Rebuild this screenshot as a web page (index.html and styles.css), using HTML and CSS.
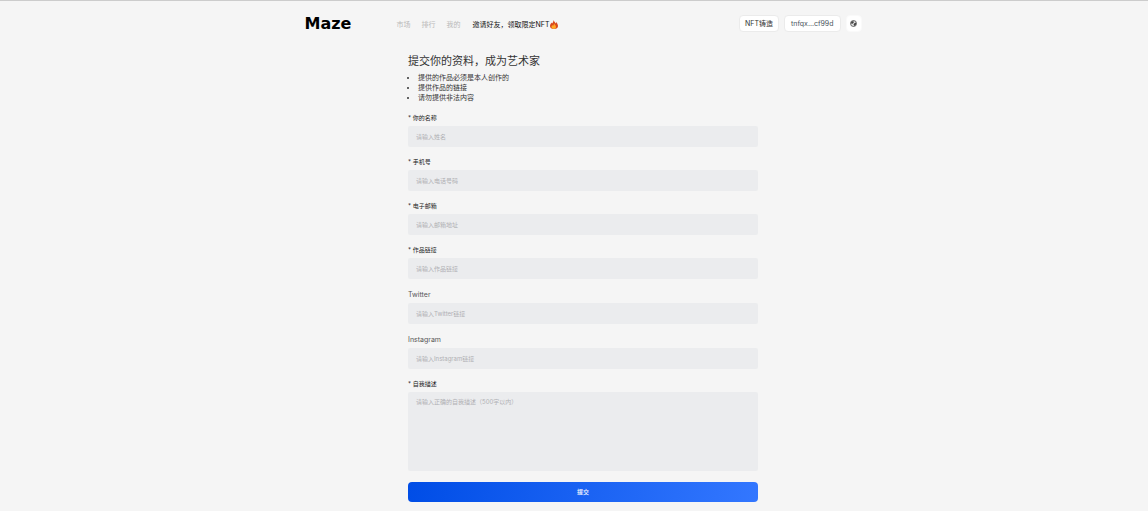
FILE: index.html
```html
<!DOCTYPE html>
<html lang="zh-CN">
<head>
<meta charset="utf-8">
<meta name="viewport" content="width=device-width, initial-scale=1">
<title>Maze</title>
<link rel="stylesheet" href="styles.css">
</head>
<body>
<header class="header">
  <a class="logo" href="#">Maze</a>
  <nav class="nav">
    <a class="nav-link" href="#">市场</a>
    <a class="nav-link" href="#">排行</a>
    <a class="nav-link" href="#">我的</a>
    <a class="nav-link nav-link-active" href="#">邀请好友，领取限定NFT<svg class="fire" viewBox="0 0 16 18" aria-hidden="true"><path fill="#d9481c" d="M7 0c1 3 3 4 4 7 1-1 1-2 1-3 2 2 4 5 4 8 0 4-3 6-8 6s-8-2-8-6c0-3 2-5 3-7l1 2c2-2 3-4 3-7z"/><path fill="#ffa826" d="M8 6c0 3 4 4 4 8 0 2-2 4-4 4s-5-2-5-4 1-3 2-4l1 2c1-1 2-3 2-6z"/></svg></a>
  </nav>
  <div class="actions">
    <button class="pill" type="button">NFT铸造</button>
    <button class="pill pill-account" type="button">tnfqx...cf99d</button>
    <button class="pill pill-icon" type="button" aria-label="语言"><svg class="globe" viewBox="0 0 14 14" aria-hidden="true"><circle cx="7" cy="7" r="6" fill="#e5e5e5" stroke="#333" stroke-width="1.4"/><path fill="#444" d="M2 4l4-2 2 2-2 3-3 1zM8 7l4-2v4l-3 3-2-2z"/></svg></button>
  </div>
</header>
<main class="main">
  <h1 class="title">提交你的资料，成为艺术家</h1>
  <ul class="rules">
    <li>提供的作品必须是本人创作的</li>
    <li>提供作品的链接</li>
    <li>请勿提供非法内容</li>
  </ul>
  <form class="form">
    <div class="field">
      <label class="label" for="name">* 你的名称</label>
      <input class="control" id="name" type="text" placeholder="请输入姓名">
    </div>
    <div class="field">
      <label class="label" for="phone">* 手机号</label>
      <input class="control" id="phone" type="tel" placeholder="请输入电话号码">
    </div>
    <div class="field">
      <label class="label" for="email">* 电子邮箱</label>
      <input class="control" id="email" type="email" placeholder="请输入邮箱地址">
    </div>
    <div class="field">
      <label class="label" for="work">* 作品链接</label>
      <input class="control" id="work" type="text" placeholder="请输入作品链接">
    </div>
    <div class="field">
      <label class="label label-optional" for="twitter">Twitter</label>
      <input class="control" id="twitter" type="text" placeholder="请输入Twitter链接">
    </div>
    <div class="field">
      <label class="label label-optional" for="instagram">Instagram</label>
      <input class="control" id="instagram" type="text" placeholder="请输入Instagram链接">
    </div>
    <div class="field">
      <label class="label" for="about">* 自我描述</label>
      <textarea class="control control-area" id="about" placeholder="请输入正确的自我描述（500字以内）"></textarea>
    </div>
    <button class="submit" type="submit">提交</button>
  </form>
</main>
</body>
</html>
```
FILE: styles.css
```css
* {
  box-sizing: border-box;
}

body {
  margin: 0;
  padding: 0 0 9px 18px;
  border-top: 1px solid #cccccc;
  background: #f5f5f5;
  color: #333333;
  font-family: Inter, "Noto Sans CJK SC", sans-serif;
  font-size: 7px;
}

a {
  color: inherit;
  text-decoration: none;
}

button,
input,
textarea {
  border: 0;
  font: inherit;
}

.header {
  display: flex;
  align-items: center;
  max-width: 557px;
  height: 45px;
  margin: 0 auto;
}

.logo {
  width: 92px;
  color: #000000;
  font: bold 16px/20px "DejaVu Sans", sans-serif;
}

.nav {
  display: flex;
  align-items: center;
  gap: 11px;
  padding-top: 2px;
  line-height: 12px;
  white-space: nowrap;
}

.nav-link {
  display: flex;
  align-items: center;
  gap: 1px;
  color: #b9b9b9;
}

.nav-link-active {
  margin-left: 1px;
  color: #111111;
}

.fire {
  width: 8px;
  height: 9px;
}

.actions {
  display: flex;
  gap: 5px;
  margin-left: auto;
}

.pill {
  height: 17px;
  padding: 0 5px;
  border: 1px solid #ebebeb;
  border-radius: 4px;
  background: #ffffff;
  color: #333333;
  line-height: 15px;
}

.pill-account {
  padding: 0 6px;
  color: #4b5560;
}

.pill-icon {
  display: flex;
  align-items: center;
  justify-content: center;
  width: 16px;
  padding: 0;
  border-color: #fafafa;
}

.globe {
  width: 7px;
  height: 7px;
}

.main {
  max-width: 350px;
  margin: 0 auto;
  padding-top: 7px;
}

.title {
  margin: 0;
  font-size: 11px;
  font-weight: 400;
  line-height: 16px;
}

.rules {
  margin: 4px 0 11px;
  padding-left: 10px;
  line-height: 10px;
}

.form {
  display: flex;
  flex-direction: column;
  gap: 11px;
}

.field {
  display: flex;
  flex-direction: column;
  gap: 4px;
}

.label {
  color: #222222;
  font-size: 6px;
  line-height: 8px;
}

.label-optional {
  color: #555555;
  font-size: 7px;
  line-height: 9px;
}

.control {
  width: 100%;
  height: 21px;
  padding: 0 8px;
  border-radius: 2px;
  background: #ebecee;
  color: #222222;
  font-size: 6px;
}

.control::placeholder {
  color: #b0b0b4;
  opacity: 1;
}

.control-area {
  height: 79px;
  padding: 5px 8px;
  line-height: 10px;
  resize: none;
}

.submit {
  height: 20px;
  padding: 0;
  border-radius: 4px;
  background: linear-gradient(100deg, #004de6, #3377ff);
  color: #ffffff;
  font-size: 6px;
  font-weight: 500;
  line-height: 20px;
}
```
